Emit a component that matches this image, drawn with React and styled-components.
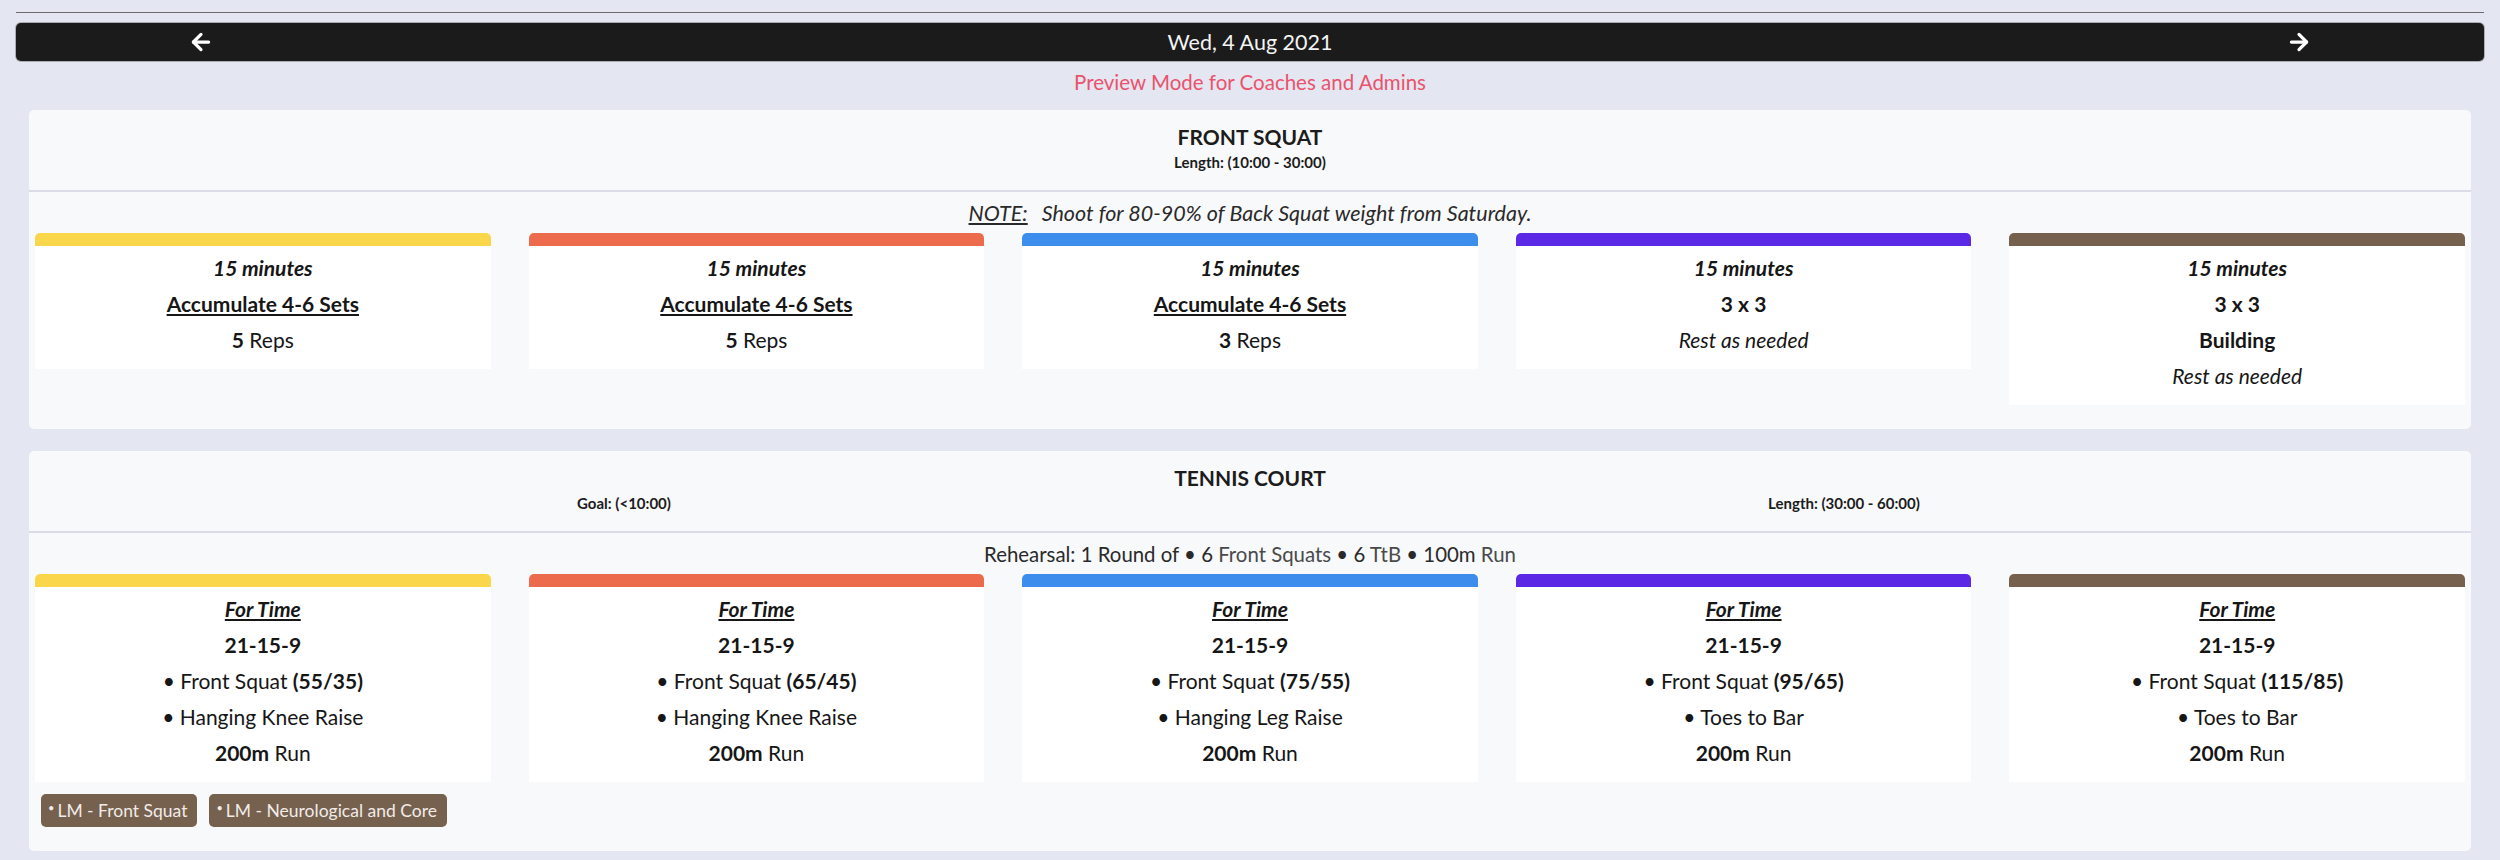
import React from 'react';
import styled, { createGlobalStyle } from 'styled-components';
import { ArrowLeft, ArrowRight } from 'lucide-react';

const GlobalStyle = createGlobalStyle`
  body {
    margin: 0;
    background-color: #e4e6f1;
    font-family: "Lato", "Noto Sans", sans-serif;
    color: #1c1c1c;
  }
`;

const Page = styled.div`
  padding: 0 16px 0 16px;
`;

const Rule = styled.div`
  margin-top: 12px;
  border-top: 1px solid #6b6b6b;
`;

const DateBar = styled.div`
  margin-top: 10px;
  height: 38px;
  background-color: #1b1b1b;
  border-radius: 5px;
  box-shadow: 0 0 0 1px rgba(0, 0, 0, 0.25);
  display: grid;
  grid-template-columns: 370px 1fr 370px;
  align-items: center;
  justify-items: center;
  color: #fff;
`;

const DateText = styled.div`
  font-size: 21.5px;
  color: #f4f4f4;
`;

const Preview = styled.div`
  margin-top: 6px;
  line-height: 30px;
  font-size: 20.5px;
  text-align: center;
  color: #e9536d;
`;

const Panel = styled.section`
  margin: ${(p) => (p.first ? '13px' : '22px')} 13px 0 13px;
  background-color: #f8f9fb;
  border-radius: 5px;
  overflow: hidden;
`;

const Header = styled.div`
  padding: 15px 0 18px;
  border-bottom: 2px solid #dadce6;
  text-align: center;
`;

const Title = styled.div`
  font-size: 21px;
  line-height: 24px;
  font-weight: 700;
  margin-bottom: 3px;
`;

const SubRow = styled.div`
  display: flex;
  margin: 0 17px 0 -15px;
`;

const Sub = styled.div`
  flex: 1;
  font-size: 15px;
  line-height: 20px;
  font-weight: 700;
`;

const Body = styled.div`
  padding: 7px 6px 24px;
`;

const Note = styled.div`
  font-size: ${(p) => (p.italic ? '21.5px' : '20.4px')};
  line-height: 28px;
  text-align: center;
  color: #2a2a2a;
  margin-bottom: 6px;
  font-style: ${(p) => (p.italic ? 'italic' : 'normal')};
`;

const NoteLabel = styled.span`
  text-decoration: underline;
  margin-right: 14px;
`;

const Soft = styled.span`
  color: #4a4a4a;
`;

const Cards = styled.div`
  display: grid;
  grid-template-columns: repeat(5, 1fr);
  column-gap: 38px;
  align-items: start;
`;

const Card = styled.div`
  background-color: #fff;
  border-radius: 5px 5px 0 0;
  overflow: hidden;
`;

const Strip = styled.div`
  height: 13px;
  background-color: ${(p) => p.color};
`;

const Lines = styled.div`
  padding: 4px 0 11px;
  text-align: center;
`;

const Line = styled.div`
  font-size: 21px;
  line-height: 36px;
  font-weight: ${(p) => (p.bold ? 700 : 400)};
  font-style: ${(p) => (p.italic ? 'italic' : 'normal')};
  text-decoration: ${(p) => (p.underline ? 'underline' : 'none')};
  color: #161616;
`;

const Tags = styled.div`
  display: flex;
  gap: 12px;
  margin: 12px 6px 0;
`;

const Tag = styled.div`
  height: 33px;
  padding: 0 10px 0 7px;
  display: flex;
  align-items: center;
  border-radius: 5px;
  background-color: #76604e;
  color: #f1ece8;
  font-size: 17.5px;
`;

const Dot = styled.span`
  font-size: 11px;
  margin-right: 3px;
  position: relative;
  top: -3px;
`;

const colors = ['#f9d64a', '#ec6b4d', '#3d8ded', '#5b28e6', '#76604e'];

const squatCards = [
  { sets: 'Accumulate 4-6 Sets', reps: '5' },
  { sets: 'Accumulate 4-6 Sets', reps: '5' },
  { sets: 'Accumulate 4-6 Sets', reps: '3' },
  { scheme: '3 x 3' },
  { scheme: '3 x 3', building: true },
];

const courtCards = [
  { load: '55/35', second: 'Hanging Knee Raise' },
  { load: '65/45', second: 'Hanging Knee Raise' },
  { load: '75/55', second: 'Hanging Leg Raise' },
  { load: '95/65', second: 'Toes to Bar' },
  { load: '115/85', second: 'Toes to Bar' },
];

const SquatCard = ({ item, color }) => (
  <Card>
    <Strip color={color} />
    <Lines>
      <Line bold italic>15 minutes</Line>
      {item.sets ? (
        <>
          <Line bold underline>{item.sets}</Line>
          <Line><b>{item.reps}</b> Reps</Line>
        </>
      ) : (
        <>
          <Line bold>{item.scheme}</Line>
          {item.building && <Line bold>Building</Line>}
          <Line italic>Rest as needed</Line>
        </>
      )}
    </Lines>
  </Card>
);

const CourtCard = ({ item, color }) => (
  <Card>
    <Strip color={color} />
    <Lines>
      <Line bold italic underline>For Time</Line>
      <Line bold>21-15-9</Line>
      <Line>• Front Squat <b>({item.load})</b></Line>
      <Line>• {item.second}</Line>
      <Line><b>200m</b> Run</Line>
    </Lines>
  </Card>
);

const App = () => {
  return (
    <Page>
      <GlobalStyle />
      <Rule />
      <DateBar>
        <ArrowLeft size={26} strokeWidth={3} />
        <DateText>Wed, 4 Aug 2021</DateText>
        <ArrowRight size={26} strokeWidth={3} />
      </DateBar>
      <Preview>Preview Mode for Coaches and Admins</Preview>

      <Panel first>
        <Header>
          <Title>FRONT SQUAT</Title>
          <Sub>Length: (10:00 - 30:00)</Sub>
        </Header>
        <Body>
          <Note italic>
            <NoteLabel>NOTE:</NoteLabel>Shoot for 80-90% of Back Squat weight from Saturday.
          </Note>
          <Cards>
            {squatCards.map((item, i) => (
              <SquatCard key={i} item={item} color={colors[i]} />
            ))}
          </Cards>
        </Body>
      </Panel>

      <Panel>
        <Header>
          <Title>TENNIS COURT</Title>
          <SubRow>
            <Sub>Goal: (&lt;10:00)</Sub>
            <Sub>Length: (30:00 - 60:00)</Sub>
          </SubRow>
        </Header>
        <Body>
          <Note>
            Rehearsal: 1 Round of • 6 <Soft>Front Squats</Soft> • 6 <Soft>TtB</Soft> • 100m <Soft>Run</Soft>
          </Note>
          <Cards>
            {courtCards.map((item, i) => (
              <CourtCard key={i} item={item} color={colors[i]} />
            ))}
          </Cards>
          <Tags>
            <Tag><Dot>•</Dot>LM - Front Squat</Tag>
            <Tag><Dot>•</Dot>LM - Neurological and Core</Tag>
          </Tags>
        </Body>
      </Panel>
    </Page>
  );
};

export default App;
